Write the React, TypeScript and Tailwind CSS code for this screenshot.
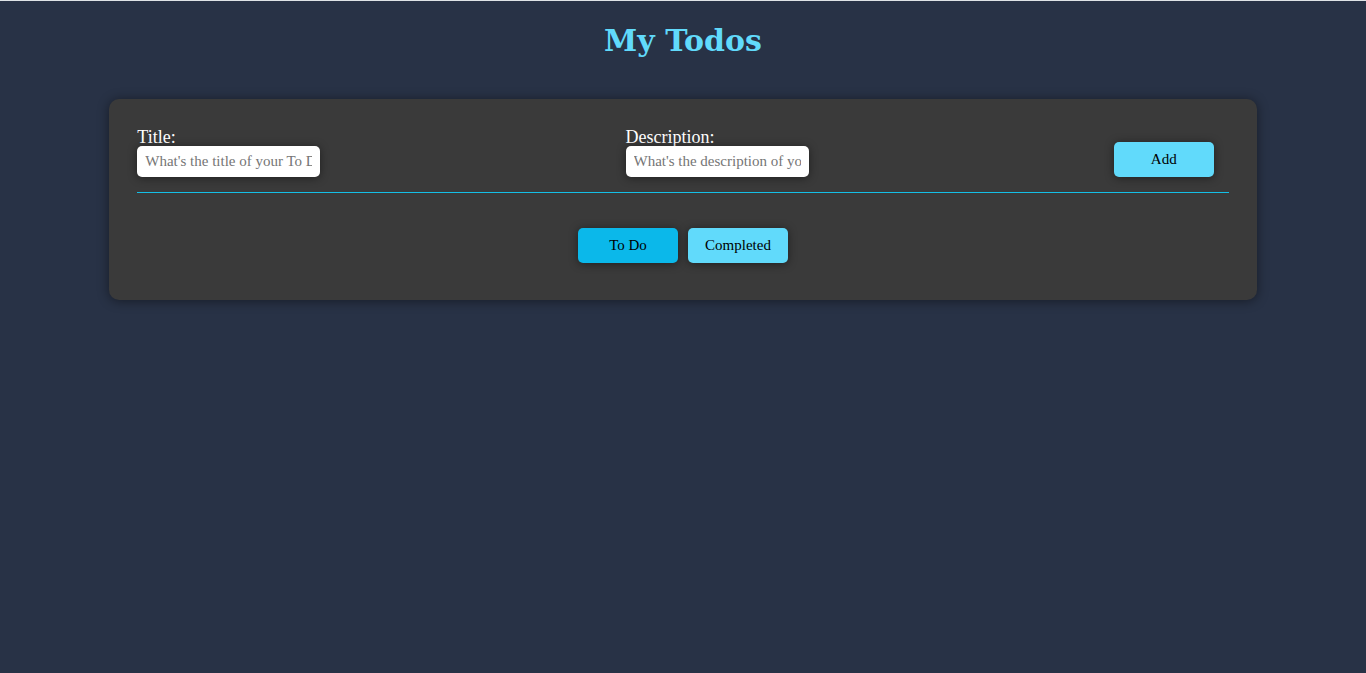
import { useState, type FormEvent } from "react";

const buttonClass =
  "h-[35px] w-[100px] cursor-pointer rounded-[5px] text-[15px] text-black shadow-[0_1px_10px_rgba(0,0,0,0.45)]";

type FieldProps = {
  id: string;
  label: string;
  placeholder: string;
  value: string;
  onChange: (value: string) => void;
};

function Field({ id, label, placeholder, value, onChange }: FieldProps) {
  return (
    <div className="flex flex-col items-start">
      <label htmlFor={id} className="text-[18px] leading-[17px] text-white">
        {label}
      </label>
      <input
        id={id}
        type="text"
        value={value}
        placeholder={placeholder}
        onChange={(event) => onChange(event.target.value)}
        className="h-[31px] w-[183px] rounded-[5px] bg-white px-2 text-[15px] text-black shadow-[0_1px_10px_rgba(0,0,0,0.45)] outline-none placeholder:text-[#757575]"
      />
    </div>
  );
}

type Todo = { title: string; description: string; done: boolean };

export default function App() {
  const [title, setTitle] = useState("");
  const [description, setDescription] = useState("");
  const [todos, setTodos] = useState<Todo[]>([]);
  const [showDone, setShowDone] = useState(false);

  const addTodo = (event: FormEvent) => {
    event.preventDefault();
    if (!title.trim()) return;
    setTodos([...todos, { title, description, done: false }]);
    setTitle("");
    setDescription("");
  };

  const toggle = (todo: Todo) =>
    setTodos(todos.map((item) => (item === todo ? { ...item, done: !item.done } : item)));

  const visible = todos.filter((todo) => todo.done === showDone);

  return (
    <div className="flex min-h-screen flex-col items-center border-t border-[#dfe3e6] bg-[#283246] font-['Georgia','Liberation_Serif',serif]">
      <h1 className="pt-5 font-['DejaVu_Serif',serif] text-[30px] leading-[40px] font-bold text-[#61dafb]">
        My Todos
      </h1>
      <main className="mt-[38px] w-[84%] rounded-[10px] bg-[#3a3a3a] px-7 pt-[30px] pb-[37px] shadow-[0_1px_12px_rgba(0,0,0,0.45)]">
        <form
          onSubmit={addTodo}
          className="flex items-end justify-between border-b border-[#14bfe6] pr-[15px] pb-[15px]"
        >
          <Field
            id="title"
            label="Title:"
            placeholder="What's the title of your To Do?"
            value={title}
            onChange={setTitle}
          />
          <Field
            id="description"
            label="Description:"
            placeholder="What's the description of your To Do?"
            value={description}
            onChange={setDescription}
          />
          <button type="submit" className={`${buttonClass} bg-[#61dafb]`}>
            Add
          </button>
        </form>
        <div className="mt-[35px] flex justify-center gap-[10px]">
          <button
            type="button"
            onClick={() => setShowDone(false)}
            className={`${buttonClass} ${showDone ? "bg-[#61dafb]" : "bg-[#0bb8ea]"}`}
          >
            To Do
          </button>
          <button
            type="button"
            onClick={() => setShowDone(true)}
            className={`${buttonClass} ${showDone ? "bg-[#0bb8ea]" : "bg-[#61dafb]"}`}
          >
            Completed
          </button>
        </div>
        {visible.length > 0 && (
          <ul className="mt-6 flex flex-col gap-3 text-white">
            {visible.map((todo, index) => (
              <li key={index}>
                <label className="flex items-center gap-2">
                  <input type="checkbox" checked={todo.done} onChange={() => toggle(todo)} />
                  {todo.title} {todo.description}
                </label>
              </li>
            ))}
          </ul>
        )}
      </main>
    </div>
  );
}
